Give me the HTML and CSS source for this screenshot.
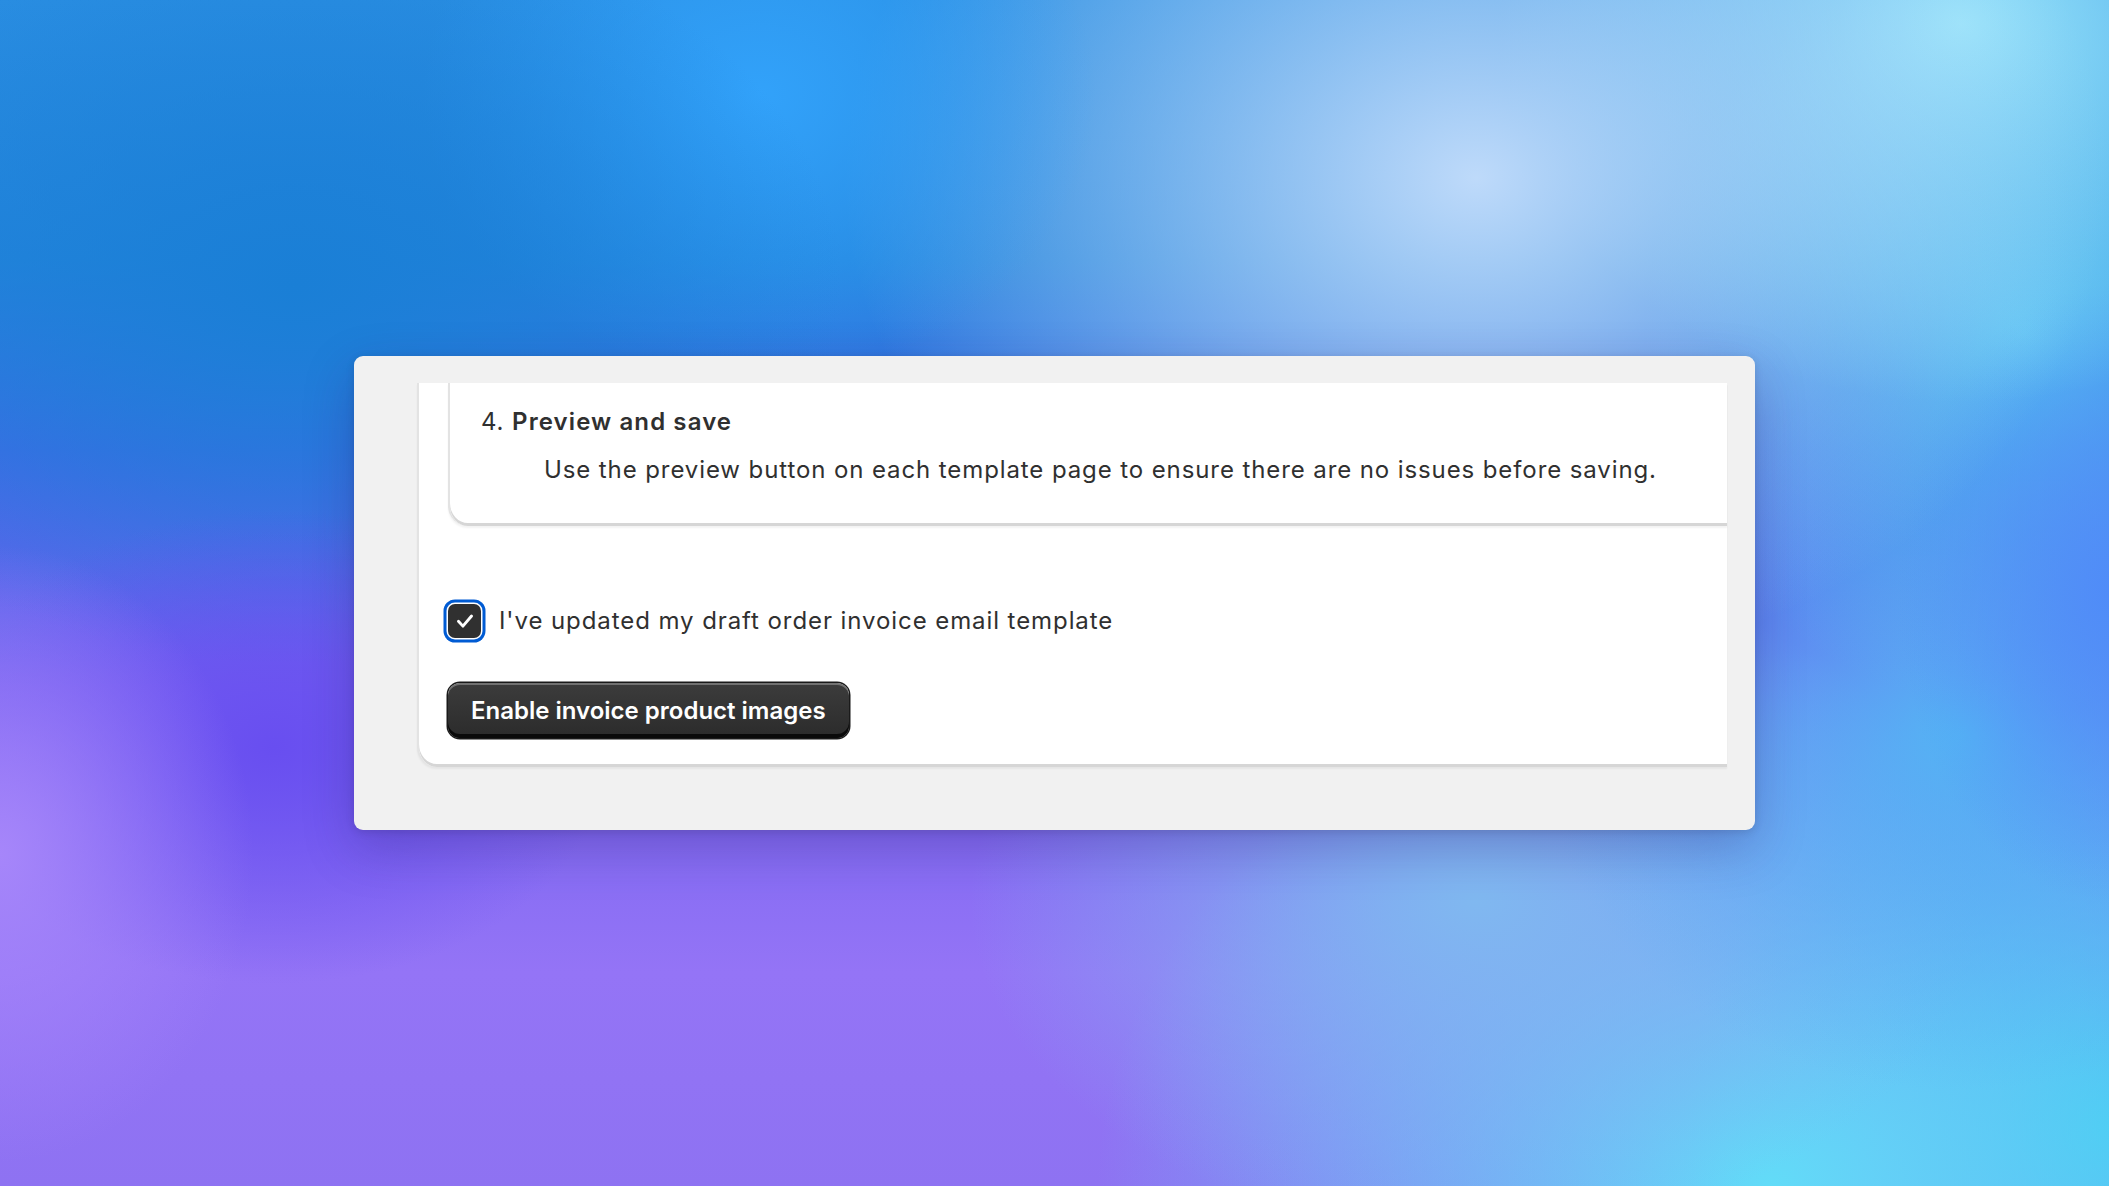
FILE: index.html
```html
<!DOCTYPE html>
<html lang="en">
  <head>
    <meta charset="UTF-8" />
    <meta name="viewport" content="width=device-width, initial-scale=1.0" />
    <title>Invoice product images</title>
    <link rel="stylesheet" href="styles.css">
  </head>
  <body>
    <div class="backdrop">
      <div class="window">
        <div class="panel">
          <!-- last step of the setup list, scrolled so its top is cut off -->
          <div class="step">
            <p class="step-title">4. <strong>Preview and save</strong></p>
            <p class="step-text">Use the preview button on each template page to ensure there are no issues before saving.</p>
          </div>

          <label class="confirm">
            <span class="checkbox">
              <svg viewBox="0 0 20 20" width="32" height="32">
                <polyline points="5.9,10.2 8.7,13.2 14.1,6.9" fill="none" stroke="#fff" stroke-width="1.8" stroke-linecap="round" stroke-linejoin="round" />
              </svg>
            </span>
            <span class="confirm-text">I've updated my draft order invoice email template</span>
          </label>

          <div class="actions">
            <button class="btn-primary" type="button">Enable invoice product images</button>
          </div>
        </div>
      </div>
    </div>
  </body>
</html>
```

FILE: styles.css
```css
* {
  margin: 0;
  padding: 0;
  box-sizing: border-box;
}

body {
  font-family: Inter, "Noto Sans", "Liberation Sans", sans-serif;
  color: #303030;
  overflow: hidden;
}

/* colourful blurred wallpaper */
.backdrop {
  width: 100vw;
  height: 100vh;
  display: flex;
  justify-content: center;
  align-items: center;
  background:
    radial-gradient(ellipse 12% 26% at 0% 72%, rgba(166, 134, 250, 1), rgba(166, 134, 250, 0)),
    radial-gradient(ellipse 16% 20% at 13% 63%, rgba(104, 78, 240, 1), rgba(104, 78, 240, 0)),
    radial-gradient(ellipse 26% 32% at 14% 24%, rgba(26, 127, 214, 1), rgba(26, 127, 214, 0)),
    radial-gradient(ellipse 16% 24% at 36% 8%, rgba(50, 162, 250, 1), rgba(50, 162, 250, 0)),
    radial-gradient(ellipse 30% 42% at 70% 15%, rgba(190, 218, 250, 1), rgba(190, 218, 250, 0)),
    radial-gradient(ellipse 22% 32% at 93% 2%, rgba(152, 228, 250, 1), rgba(152, 228, 250, 0)),
    radial-gradient(ellipse 10% 26% at 100% 50%, rgba(80, 140, 248, 1), rgba(80, 140, 248, 0)),
    radial-gradient(ellipse 18% 32% at 96% 28%, rgba(88, 192, 242, 1), rgba(88, 192, 242, 0)),
    radial-gradient(ellipse 20% 30% at 93% 62%, rgba(84, 180, 244, 1), rgba(84, 180, 244, 0)),
    radial-gradient(ellipse 24% 28% at 70% 76%, rgba(128, 184, 240, 1), rgba(128, 184, 240, 0)),
    radial-gradient(ellipse 32% 45% at 84% 100%, rgba(98, 220, 248, 1), rgba(98, 220, 248, 0)),
    radial-gradient(ellipse 20% 40% at 100% 95%, rgba(64, 192, 240, 1), rgba(64, 192, 240, 0)),
    linear-gradient(180deg, #2a8ee2 0%, #2484dc 22%, #3e6ce6 38%, #7462f0 58%, #9474f6 82%, #8e72f2 100%);
}

/* grey app frame */
.window {
  width: 1401px;
  height: 474px;
  background: #f1f1f1;
  border-radius: 9px;
  padding: 27px 28px 0 63px;
  box-shadow: 0 18px 50px rgba(40, 30, 110, 0.28), 0 2px 8px rgba(0, 0, 0, 0.12);
}

/* white card (top scrolled out of view) */
.panel {
  height: 384px;
  background: #fff;
  border-left: 2px solid #e3e3e3;
  border-bottom-left-radius: 20px;
  box-shadow: inset 0 -3px 0 #d6d6d6, 0 2px 2px rgba(0, 0, 0, 0.05);
  padding: 0 0 0 29px;
}

.step {
  height: 143px;
  border-left: 2px solid #e3e3e3;
  border-bottom-left-radius: 20px;
  box-shadow: inset 0 -3px 0 #d6d6d6, 0 2px 2px rgba(0, 0, 0, 0.05);
  padding: 21px 0 0 31px;
  font-size: 24px;
  line-height: 36px;
  letter-spacing: 0.9px;
}

.step-title strong {
  font-weight: 600;
  letter-spacing: 1.1px;
}

.step-text {
  margin-top: 12px;
  padding-left: 63px;
}

/* confirmation checkbox */
.confirm {
  display: flex;
  align-items: center;
  gap: 18px;
  margin-top: 77px;
  font-size: 24px;
  line-height: 36px;
  letter-spacing: 0.92px;
}

.checkbox {
  width: 33px;
  height: 34px;
  border-radius: 7px;
  background: #303030;
  display: flex;
  justify-content: center;
  align-items: center;
  box-shadow: 0 0 0 1.5px #fff, 0 0 0 4.5px #005bd3;
}

.actions {
  margin-top: 44px;
}

.btn-primary {
  height: 55px;
  padding: 0 23px;
  border: none;
  border-radius: 12px;
  font-family: inherit;
  font-size: 24px;
  font-weight: 600;
  color: #fff;
  background: linear-gradient(#3c3c3c, #2b2b2b);
  box-shadow:
    inset 0 2px 0 rgba(255, 255, 255, 0.28),
    inset 0 -4px 0 #0a0a0a,
    0 0 0 1.5px #1a1a1a;
}
```
